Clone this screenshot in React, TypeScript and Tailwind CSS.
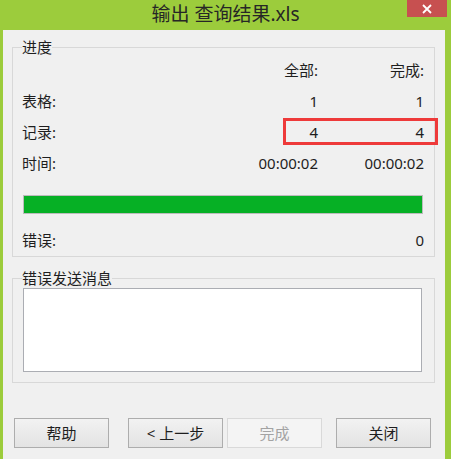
const font = "font-['Noto_Sans','Noto_Sans_CJK_SC',sans-serif]";

function Row({ label, a, b }: { label: string; a?: string; b?: string }) {
  return (
    <div className="flex h-[31px] items-center text-[15px] text-[#1e1e1e]">
      <span className="flex-1">{label}</span>
      <span className="w-[100px] text-right">{a}</span>
      <span className="w-[106px] text-right">{b}</span>
    </div>
  );
}

function Button({ label, disabled }: { label: string; disabled?: boolean }) {
  return (
    <div
      className={
        disabled
          ? "flex h-[30px] w-[95px] items-center justify-center border border-[#d9d9d9] bg-[#f4f4f4] text-[15px] text-[#a3a3a3]"
          : "flex h-[30px] w-[95px] items-center justify-center border border-[#adadad] bg-gradient-to-b from-[#f2f2f2] to-[#e3e3e3] text-[15px] text-[#1e1e1e]"
      }
    >
      {label}
    </div>
  );
}

export default function App() {
  return (
    <div className={`relative flex h-[459px] w-[451px] flex-col overflow-hidden bg-[#9ccc3c] ${font}`}>
      {/* title bar */}
      <div className="relative flex h-[30px] shrink-0 items-center justify-center">
        <span className="text-[19px] leading-none text-[#262626] -mt-[2px]">输出 查询结果.xls</span>
        <div className="absolute right-[4px] top-0 flex h-[17px] w-[40px] items-center justify-center bg-[#c75050]">
          <svg width="10" height="10" viewBox="0 0 10 10">
            <path d="M1 1 L9 9 M9 1 L1 9" stroke="#fff" strokeWidth="1.8" />
          </svg>
        </div>
      </div>

      {/* client area */}
      <div className="ml-[3px] mr-[6px] flex flex-1 flex-col bg-[#f0f0f0] pl-[9px] pr-[10px]">
        <fieldset className="mt-[9px] border border-[#d8d8d8] pl-[9px] pr-[10px]">
          <legend className="text-[15px] leading-[16px] text-[#1e1e1e]">进度</legend>
          <Row label="" a="全部:" b="完成:" />
          <Row label="表格:" a="1" b="1" />
          <Row label="记录:" a="4" b="4" />
          <Row label="时间:" a="00:00:02" b="00:00:02" />
          <div className="mx-[1px] mt-[16px] h-[19px] border border-[#bcbcbc] bg-[#e6e6e6]">
            <div className="h-full w-full bg-[#06b025]" />
          </div>
          <div className="mt-[11px]">
            <Row label="错误:" b="0" />
          </div>
        </fieldset>

        <fieldset className="mt-[13px] border border-[#d8d8d8] pb-[10px] pl-[9px] pr-[10px]">
          <legend className="text-[15px] leading-[16px] text-[#1e1e1e]">错误发送消息</legend>
          <div className="ml-[1px] mr-[2px] mt-[2px] h-[84px] border border-[#abadb3] bg-white" />
        </fieldset>

        <div className="ml-[2px] mt-[35px] flex">
          <Button label="帮助" />
          <div className="ml-[19px]">
            <Button label="< 上一步" />
          </div>
          <div className="ml-[4px]">
            <Button label="完成" disabled />
          </div>
          <div className="ml-[14px]">
            <Button label="关闭" />
          </div>
        </div>
      </div>

      {/* annotation box */}
      <div className="absolute left-[283px] top-[118px] h-[27px] w-[155px] border-[3px] border-[#ee3a3a]" />
    </div>
  );
}
